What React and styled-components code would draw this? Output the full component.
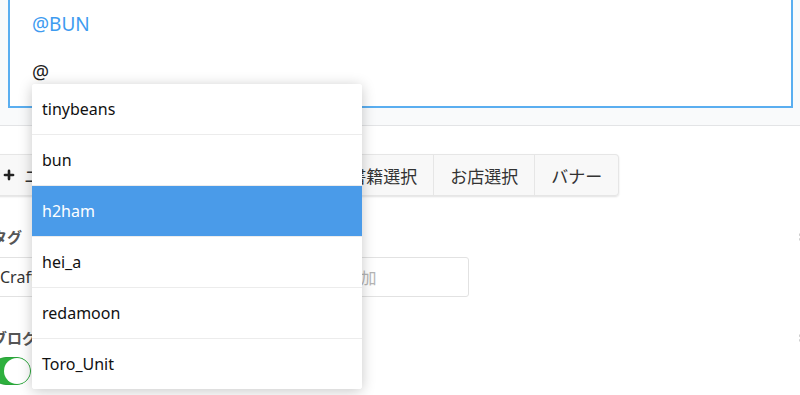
import React from 'react';
import styled, { createGlobalStyle } from 'styled-components';
import { Plus, Settings } from 'lucide-react';

const GlobalStyle = createGlobalStyle`
  html, body {
    margin: 0;
    padding: 0;
    overflow: hidden;
    background: #fff;
    font-family: "Noto Sans", "Noto Sans CJK JP", sans-serif;
  }
`;

const Page = styled.div`
  position: relative;
  width: 800px;
  height: 395px;
  overflow: hidden;
`;

const EditorPanel = styled.div`
  background: #f9fafb;
  padding: 0 7px 17px 8px;
  border-bottom: 1px solid #e3e4e6;
`;

const Editor = styled.div`
  margin-top: -20px;
  background: #fff;
  border: 2px solid #5aaef0;
  padding: 30px 22px 22px;
  font-size: 19px;
  line-height: 24px;
  color: #222;
`;

const Line = styled.div`
  min-height: 24px;
  color: ${({ mention }) => (mention ? '#3d9bf0' : '#222')};
`;

const Content = styled.div`
  margin-left: -8px;
  width: calc(100% + 20px);
  padding-top: 28px;
  display: flex;
  flex-direction: column;
`;

const ButtonGroup = styled.div`
  display: flex;
  align-self: flex-start;
  margin-left: -4px;
  border-radius: 4px;
  box-shadow: 0 1px 2px rgba(0, 0, 0, 0.12);
`;

const Button = styled.div`
  display: flex;
  align-items: center;
  gap: 8px;
  height: 42px;
  box-sizing: border-box;
  padding: ${({ first }) => (first ? '0 22px 0 13px' : '0 16px')};
  background: #f8f8f8;
  border: 1px solid #e6e6e6;
  border-left-width: ${({ first }) => (first ? '1px' : '0')};
  font-size: 17px;
  color: #333;
  &:first-child { border-radius: 4px 0 0 4px; }
  &:last-child { border-radius: 0 4px 4px 0; }
`;

const FieldHead = styled.div`
  display: flex;
  justify-content: space-between;
  align-items: center;
  margin-top: ${({ gap }) => gap}px;
`;

const Label = styled.div`
  font-size: 15px;
  font-weight: 700;
  color: #555;
  line-height: 20px;
`;

const TagInput = styled.div`
  margin-top: 10px;
  width: 477px;
  height: 40px;
  box-sizing: border-box;
  border: 1px solid #e2e2e2;
  border-radius: 3px;
  display: flex;
  align-items: center;
  gap: 28px;
  padding: 0 7px;
  font-size: 16px;
  color: #333;
`;

const Placeholder = styled.span`
  color: #b5b5b5;
`;

const Toggle = styled.div`
  margin-top: 9px;
  width: 39px;
  height: 28px;
  box-sizing: border-box;
  border-radius: 14px;
  background: #2eb03e;
  border: 1px solid #2aa33a;
  display: flex;
  justify-content: flex-end;
`;

const Knob = styled.div`
  width: 26px;
  height: 26px;
  border-radius: 50%;
  background: #fff;
`;

const Dropdown = styled.div`
  position: absolute;
  left: 32px;
  top: 84px;
  width: 330px;
  background: #fff;
  border-radius: 3px;
  box-shadow: 0 2px 14px rgba(0, 0, 0, 0.22);
  overflow: hidden;
`;

const Item = styled.div`
  height: 50px;
  display: flex;
  align-items: center;
  padding: 0 10px;
  font-size: 16px;
  background: ${({ active }) => (active ? '#4a9be9' : '#fff')};
  color: ${({ active }) => (active ? '#fff' : '#111')};
  border-bottom: 1px solid #ececec;
  &:last-child { border-bottom: none; }
`;

const users = ['tinybeans', 'bun', 'h2ham', 'hei_a', 'redamoon', 'Toro_Unit'];
const buttons = ['ニュース枠', '画像選択', '商品選択', '書籍選択', 'お店選択', 'バナー'];
const tags = ['Craft Beer', 'IPA', 'クラフトビール'];

export default function App() {
  return (
    <Page>
      <GlobalStyle />
      <EditorPanel>
        <Editor>
          <Line mention>@BUN</Line>
          <Line />
          <Line>@</Line>
        </Editor>
      </EditorPanel>

      <Content>
        <ButtonGroup>
          {buttons.map((b, i) => (
            <Button key={b} first={i === 0}>
              {i === 0 && <Plus size={14} strokeWidth={4.5} color="#222" />}
              {b}
            </Button>
          ))}
        </ButtonGroup>

        <FieldHead gap={31}>
          <Label>タグ</Label>
          <Settings size={14} color="#c4c4c4" />
        </FieldHead>
        <TagInput>
          {tags.map((t) => (
            <span key={t}>{t}</span>
          ))}
          <Placeholder>タグを追加</Placeholder>
        </TagInput>

        <FieldHead gap={31}>
          <Label>ブログに表示</Label>
          <Settings size={14} color="#c4c4c4" />
        </FieldHead>
        <Toggle>
          <Knob />
        </Toggle>
      </Content>

      <Dropdown>
        {users.map((u) => (
          <Item key={u} active={u === 'h2ham'}>{u}</Item>
        ))}
      </Dropdown>
    </Page>
  );
}
